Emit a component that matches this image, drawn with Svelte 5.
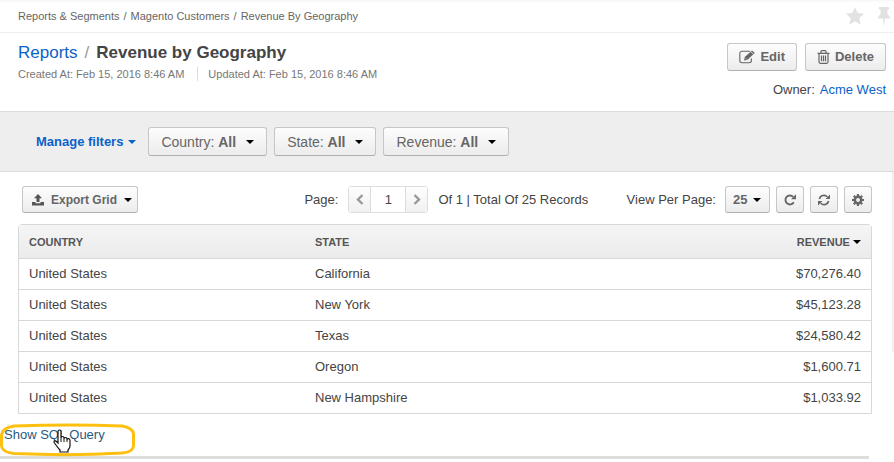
<script>
  const filters = ['Country', 'State', 'Revenue'];
  const rows = [
    ['United States', 'California', '$70,276.40'],
    ['United States', 'New York', '$45,123.28'],
    ['United States', 'Texas', '$24,580.42'],
    ['United States', 'Oregon', '$1,600.71'],
    ['United States', 'New Hampshire', '$1,033.92']
  ];
  let page = $state('1');
  let perPage = $state('25');
</script>

{#snippet caret()}
  <svg class="caret" width="8" height="4" viewBox="0 0 8 4" aria-hidden="true"><path d="M0 0h8L4 4z" fill="currentColor" /></svg>
{/snippet}

<div class="app">
  <nav class="crumbs" aria-label="Breadcrumb">
    <span>Reports &amp; Segments</span><i>/</i><span>Magento Customers</span><i>/</i><span>Revenue By Geography</span>
    <div class="marks">
      <button class="bare" aria-label="Add to favorites">
        <svg width="18" height="18" viewBox="0 0 18 18"><path d="M9 0l2.700 5.900 6.300.8-4.600 4.400 1.200 6.400L9 14.400l-5.600 3.100 1.200-6.400L0 6.700l6.300-.8z" fill="#e2e2e2" /></svg>
      </button>
      <button class="bare" aria-label="Pin page">
        <svg width="12" height="18" viewBox="0 0 12 18"><path d="M1 0h10v2.500H9.500v5C11 8.200 12 9.600 12 11.500H7L6.300 18h-.6L5 11.500H0C0 9.600 1 8.200 2.500 7.500v-5H1z" fill="#e2e2e2" /></svg>
      </button>
    </div>
  </nav>

  <header>
    <div>
      <h1><a href="#reports">Reports</a><i>/</i>Revenue by Geography</h1>
      <div class="meta"><span>Created At: Feb 15, 2016 8:46 AM</span><span>Updated At: Feb 15, 2016 8:46 AM</span></div>
    </div>
    <div class="side">
      <div class="actions">
        <button class="btn">
          <svg width="16" height="14" viewBox="0 0 16 14" fill="none" stroke="#666"><path d="M11 1.200H3A2.200 2.200 0 0 0 .8 3.400v7.200A2.200 2.200 0 0 0 3 12.800h7.200a2.200 2.200 0 0 0 2.200-2.200V8.500" stroke-width="1.100" /><path d="M5 10.500l.8-3.500L13 .5l2.800 2.600L8.500 9.800z" fill="#666" stroke="none" /><path d="M6.600 8.300l1 1M12 1.900l2.500 2.300" stroke="#f5f5f5" stroke-width=".8" /></svg>
          Edit
        </button>
        <button class="btn">
          <svg width="13" height="14" viewBox="0 0 13 14" fill="none" stroke="#666" stroke-width="1.200"><path d="M.5 3.300h12M4 3V1.600Q4 .7 5 .7h3q1 0 1 .9V3M2 3.500v8.300q0 1.500 1.300 1.500h6.400q1.300 0 1.300-1.500V3.500M4.500 5.500v5.700M6.500 5.500v5.700M8.500 5.500v5.700" /></svg>
          Delete
        </button>
      </div>
      <div class="owner"><span>Owner:</span><a href="#owner">Acme West</a></div>
    </div>
  </header>

  <section class="filters" aria-label="Filters">
    <button class="bare manage">Manage filters {@render caret()}</button>
    {#each filters as name}
      <button class="btn filter"><span>{name}: <b>All</b></span>{@render caret()}</button>
    {/each}
  </section>

  <main>
    <div class="toolbar">
      <button class="btn small export">
        <svg width="12" height="12" viewBox="0 0 12 12" fill="#555"><path d="M6 0l4 4.200H7.500V8h-3V4.200H2zM0 8h3.500v1.200h5V8H12v3.500H0z" /></svg>
        Export Grid {@render caret()}
      </button>
      <div class="pager">
        <label for="page">Page:</label>
        <div class="group">
          <button aria-label="Previous page"><svg width="8" height="11" viewBox="0 0 8 11" fill="none" stroke="#999" stroke-width="2.400"><path d="M6.500 1L2 5.500 6.500 10" /></svg></button>
          <input id="page" bind:value={page} />
          <button aria-label="Next page"><svg width="8" height="11" viewBox="0 0 8 11" fill="none" stroke="#999" stroke-width="2.400"><path d="M1.500 1L6 5.500 1.500 10" /></svg></button>
        </div>
        <span>Of 1 | Total Of 25 Records</span>
      </div>
      <div class="view">
        <label for="per-page">View Per Page:</label>
        <div class="select">
          <select id="per-page" class="btn small" bind:value={perPage}>
            <option>10</option><option>25</option><option>50</option><option>100</option>
          </select>
          {@render caret()}
        </div>
        <button class="btn small square" aria-label="Refresh">
          <svg width="12" height="12" viewBox="0 0 12 12"><path d="M9.800 8.300A4.500 4.500 0 1 1 9.200 2.800" fill="none" stroke="#666" stroke-width="1.900" /><path d="M12 .3v4.900H7z" fill="#666" /></svg>
        </button>
        <button class="btn small square" aria-label="Reset">
          <svg width="12" height="12" viewBox="0 0 12 12"><path d="M1.400 5A4.600 4.600 0 0 1 9.300 2.800M10.600 7A4.600 4.600 0 0 1 2.700 9.200" fill="none" stroke="#666" stroke-width="1.700" /><path d="M12 .5V5H7.500zM0 11.500V7h4.500z" fill="#666" /></svg>
        </button>
        <button class="btn small square" aria-label="Grid settings">
          <svg width="12" height="12" viewBox="0 0 12 12" fill="none" stroke="#666"><circle cx="6" cy="6" r="3.200" stroke-width="2.600" /><path d="M6 0v2M6 10v2M0 6h2M10 6h2M1.800 1.800l1.400 1.400M8.800 8.800l1.400 1.400M10.200 1.800L8.800 3.200M3.200 8.800l-1.400 1.400" stroke-width="2.200" /></svg>
        </button>
      </div>
    </div>

    <table>
      <thead>
        <tr><th>COUNTRY</th><th>STATE</th><th>REVENUE {@render caret()}</th></tr>
      </thead>
      <tbody>
        {#each rows as row}
          <tr>{#each row as cell}<td>{cell}</td>{/each}</tr>
        {/each}
      </tbody>
    </table>
  </main>

  <div class="sql">
    <a href="#sql">Show SQL Query</a>
    <svg class="ring" width="136" height="34" viewBox="0 0 136 34" fill="none" aria-hidden="true"><path d="M14 3Q70 1 122 3Q133 5 133.500 11V23Q133 29 122 30Q70 33 14 30.500Q2 29 1.500 23V12Q2 5 14 3z" stroke="#fdc010" stroke-width="3" /></svg>
    <svg class="hand" width="18" height="24" viewBox="0 0 18 24" aria-hidden="true"><path d="M5 14V2.500Q5 1 6.500 1T8 2.500V9q0-1.500 1.500-1.500T11 9v1q0-1.500 1.500-1.500T14 10v1q0-1.500 1.500-1.300T17 11.500V17q0 2-2 4v2H7v-2q-2-2-5.500-7Q.5 12.500 1.500 12T3.500 12.500z" fill="#fff" stroke="#111" stroke-width="1.200" /><path d="M8 9v4M11 10v3M14 11v2" stroke="#111" /></svg>
  </div>
  <div class="rule"></div>
</div>

<style>
  :global(body) { margin: 0; background: #fff; }
  .app { font: 13px/18px "Liberation Sans", Arial, sans-serif; color: #444; }
  .app * { box-sizing: border-box; }
  a { color: #0a62c9; text-decoration: none; }
  i { font-style: normal; }
  button, input, select { font: inherit; color: inherit; margin: 0; }
  svg { display: block; flex: none; }
  .bare { border: 0; background: none; padding: 0; }

  .crumbs { display: flex; align-items: center; height: 33px; padding: 0 4px 0 18px; border-bottom: 1px solid #eee; background: linear-gradient(#f6f6f6, #fff 3px); font-size: 11px; color: #666; }
  .crumbs i { margin: 0 4px; }
  .marks { display: flex; gap: 14px; margin-left: auto; }

  header { display: flex; justify-content: space-between; height: 78px; padding: 10px 8px 0 18px; }
  h1 { margin: 0; font-size: 17px; line-height: 20px; }
  h1 a { font-weight: 400; }
  h1 i { margin: 0 7px; font-weight: 400; color: #999; }
  .meta { display: flex; margin-top: 4px; font-size: 11px; line-height: 14px; color: #777; }
  .meta span + span { margin-left: 13px; padding-left: 10px; border-left: 1px solid #ddd; }
  .actions { display: flex; gap: 8px; }
  .owner { display: flex; justify-content: flex-end; gap: 5px; margin-top: 10px; }

  .btn { display: flex; align-items: center; gap: 5px; height: 28px; padding: 0 11px; border: 1px solid #c6c6c6; border-bottom-color: #b0b0b0; border-radius: 3px; background: linear-gradient(#fdfdfd, #ececec); font-size: 13px; font-weight: 700; color: #666; }
  .filters { display: flex; align-items: center; gap: 7px; height: 61px; padding-left: 36px; border: solid #dcdcdc; border-width: 1px 0; background: #eee; }
  .manage { display: flex; align-items: center; gap: 5px; margin-right: 5px; font-weight: 700; color: #0a62c9; }
  .filter { gap: 10px; height: 29px; padding: 0 12px; font-size: 14px; font-weight: 400; }
  .filter .caret, .export .caret, .select .caret { color: #000; }

  main { padding: 14px 22px 0 18px; background: linear-gradient(#f1f1f1, #f1f1f1) right top / 2px 180px no-repeat; }
  .toolbar { display: flex; align-items: center; justify-content: space-between; padding-left: 4px; }
  .small { height: 27px; }
  .export { gap: 7px; padding: 0 5px 0 9px; font-size: 12px; }
  .pager, .view, .group { display: flex; align-items: center; }
  .pager { gap: 10px; margin-left: 128px; }
  .group { height: 27px; border: 1px solid #ddd; border-radius: 3px; }
  .group button { display: flex; align-items: center; justify-content: center; width: 21px; height: 25px; padding: 0; border: 0; background: linear-gradient(#fdfdfd, #f1f1f1); }
  .group input { width: 36px; height: 25px; padding: 0; border: solid #ddd; border-width: 0 1px; text-align: center; }
  .view { gap: 6px; }
  .select { position: relative; margin-left: 3px; }
  .select select { width: 45px; padding: 0 7px; appearance: none; }
  .select .caret { position: absolute; right: 9px; top: 12px; pointer-events: none; }
  .square { justify-content: center; width: 28px; padding: 0; }

  table { width: 100%; margin-top: 11px; border: 1px solid #d8d8d8; border-radius: 4px 4px 0 0; border-spacing: 0; table-layout: fixed; }
  th { height: 33px; padding: 0 10px; background: linear-gradient(#f5f5f5, #ebebeb); font-size: 11px; text-align: left; color: #555; }
  td { height: 31px; padding: 0 10px; border-top: 1px solid #d8d8d8; }
  th:nth-child(n + 2), td:nth-child(n + 2) { padding-left: 12px; }
  th:last-child, td:last-child { text-align: right; }
  th .caret { display: inline-block; vertical-align: 2px; color: #000; }

  .sql { position: relative; height: 42px; padding: 12px 4px 0; }
  .sql a { color: #28597f; }
  .ring { position: absolute; left: 0; top: 9px; pointer-events: none; }
  .hand { position: absolute; left: 53px; top: 15px; pointer-events: none; }
  .rule { height: 3px; margin-right: 25px; background: #ddd; }
</style>
